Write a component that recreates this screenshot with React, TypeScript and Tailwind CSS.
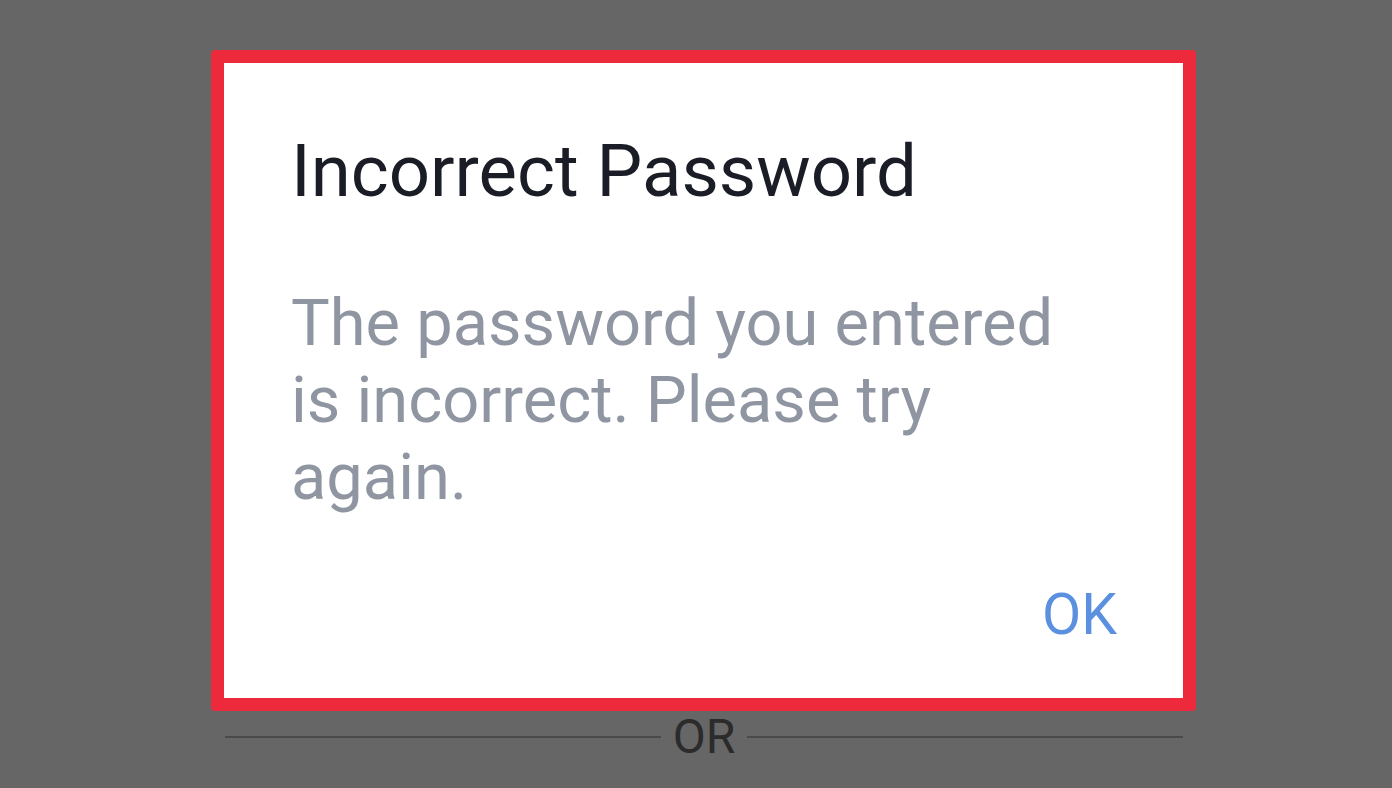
export default function App() {
  return (
    <div className="w-[1392px] h-[788px] bg-[#666666] overflow-hidden flex flex-col items-start pl-[211px] pt-[50px]" style={{ fontFamily: 'Roboto, "Liberation Sans", sans-serif' }}>
      {/* Dialog with highlight */}
      <div className="w-[985px] h-[661px] border-[13px] border-[#ec2a3c] rounded-[4px] bg-white flex flex-col pl-[67px] pr-[66px]">
        <h1 className="text-[72.5px] leading-none font-normal text-[#1a1d26] mt-[73px]">Incorrect Password</h1>
        <p className="text-[65px] leading-[77px] text-[#8f95a1] mt-[76px] w-[800px]">
          The password you entered is incorrect. Please try again.
        </p>
        <div className="flex justify-end mt-auto mb-[55px]">
          <button className="text-[57px] leading-none text-[#5b8fdf]">OK</button>
        </div>
      </div>

      {/* OR divider */}
      <div className="w-[958px] ml-[14px] flex items-center gap-[12px] mt-[2px]">
        <div className="flex-1 h-[2px] bg-[#4a4a4a]" />
        <span className="text-[48px] leading-none text-[#2b2b2b]">OR</span>
        <div className="flex-1 h-[2px] bg-[#4a4a4a]" />
      </div>
    </div>
  )
}
